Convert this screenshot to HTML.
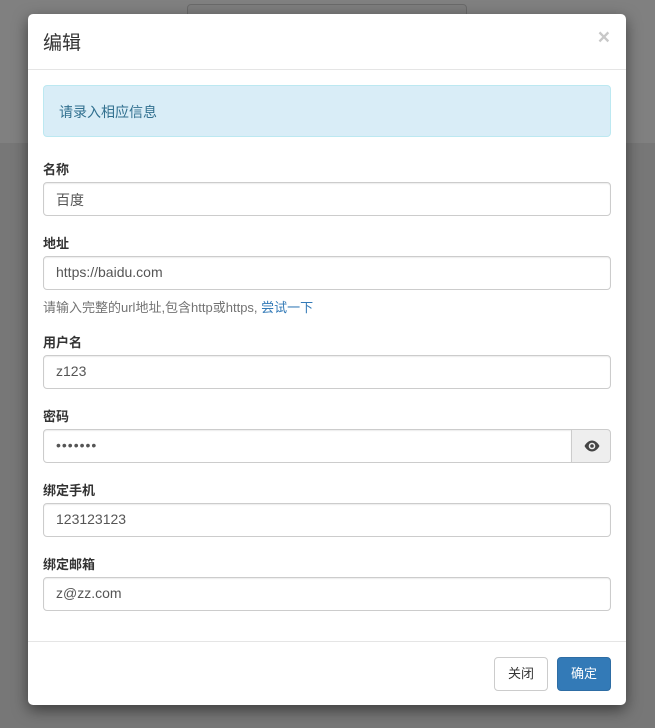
<!DOCTYPE html>
<html><head><meta charset="utf-8"><style>
*{box-sizing:border-box;margin:0;padding:0}
body{width:655px;height:728px;overflow:hidden;position:relative;background:#777;font-family:"Liberation Sans","Noto Sans CJK SC",sans-serif;font-size:14px;color:#333}
.top{position:absolute;left:0;top:0;width:655px;height:143px;background:#808080}
.ghost{position:absolute;left:187px;top:4px;width:280px;height:40px;border:1px solid #6a6a6a;border-radius:4px;background:#7d7d7d}
.modal{position:absolute;left:28px;top:14px;width:598px;height:691px;background:#fff;border-radius:5px;box-shadow:0 5px 15px rgba(0,0,0,.5)}
.a{position:absolute}
.title{left:15px;top:14px;font-size:19px;color:#333}
.close{right:16px;top:12px;font-size:21px;font-weight:bold;color:#c8c8c8}
.hr{left:0;width:598px;height:1px;background:#e5e5e5}
.alert{left:15px;top:71px;width:568px;height:52px;background:#d9edf7;border:1px solid #bce8f1;border-radius:4px;color:#31708f;padding:16px 15px;font-size:14px}
.lbl{left:15px;font-weight:bold;font-size:13px;color:#333}
.inp{left:15px;width:568px;height:34px;border:1px solid #ccc;border-radius:4px;padding:7px 12px;font-size:14px;color:#555;box-shadow:inset 0 1px 1px rgba(0,0,0,.075)}
.help{left:15px;top:283px;font-size:13px;color:#737373}
.help span{color:#337ab7}
.btn{height:34px;border-radius:4px;font-size:13px;text-align:center;line-height:32px}
</style></head><body>
<div class="top"></div><div class="ghost"></div>
<div class="modal">
<div class="a title">编辑</div>
<div class="a close">×</div>
<div class="a hr" style="top:55px"></div>
<div class="a alert">请录入相应信息</div>
<div class="a lbl" style="top:145px">名称</div>
<div class="a inp" style="top:168px">百度</div>
<div class="a lbl" style="top:219px">地址</div>
<div class="a inp" style="top:242px">https://baidu.com</div>
<div class="a help">请输入完整的url地址,包含http或https, <span>尝试一下</span></div>
<div class="a lbl" style="top:318px">用户名</div>
<div class="a inp" style="top:341px">z123</div>
<div class="a lbl" style="top:392px">密码</div>
<div class="a inp" style="top:415px;width:529px;border-radius:4px 0 0 4px;letter-spacing:1px">•••••••</div>
<div class="a" style="top:415px;left:543px;width:40px;height:34px;background:#eee;border:1px solid #ccc;border-radius:0 4px 4px 0">
<svg width="40" height="32" viewBox="0 0 40 32"><path d="M12.5 16c2.2-3.8 4.8-5.5 7.5-5.5s5.3 1.7 7.5 5.5c-2.2 3.8-4.8 5.5-7.5 5.5s-5.3-1.7-7.5-5.5z" fill="#444"/><circle cx="20" cy="16" r="3.3" fill="#eee"/><circle cx="20" cy="16" r="1.8" fill="#444"/></svg></div>
<div class="a lbl" style="top:466px">绑定手机</div>
<div class="a inp" style="top:489px">123123123</div>
<div class="a lbl" style="top:540px">绑定邮箱</div>
<div class="a inp" style="top:563px">z@zz.com</div>
<div class="a hr" style="top:627px"></div>
<div class="a btn" style="left:466px;top:643px;width:54px;border:1px solid #ccc;background:#fff;color:#333">关闭</div>
<div class="a btn" style="left:529px;top:643px;width:54px;border:1px solid #2e6da4;background:#337ab7;color:#fff">确定</div>
</div>
</body></html>
